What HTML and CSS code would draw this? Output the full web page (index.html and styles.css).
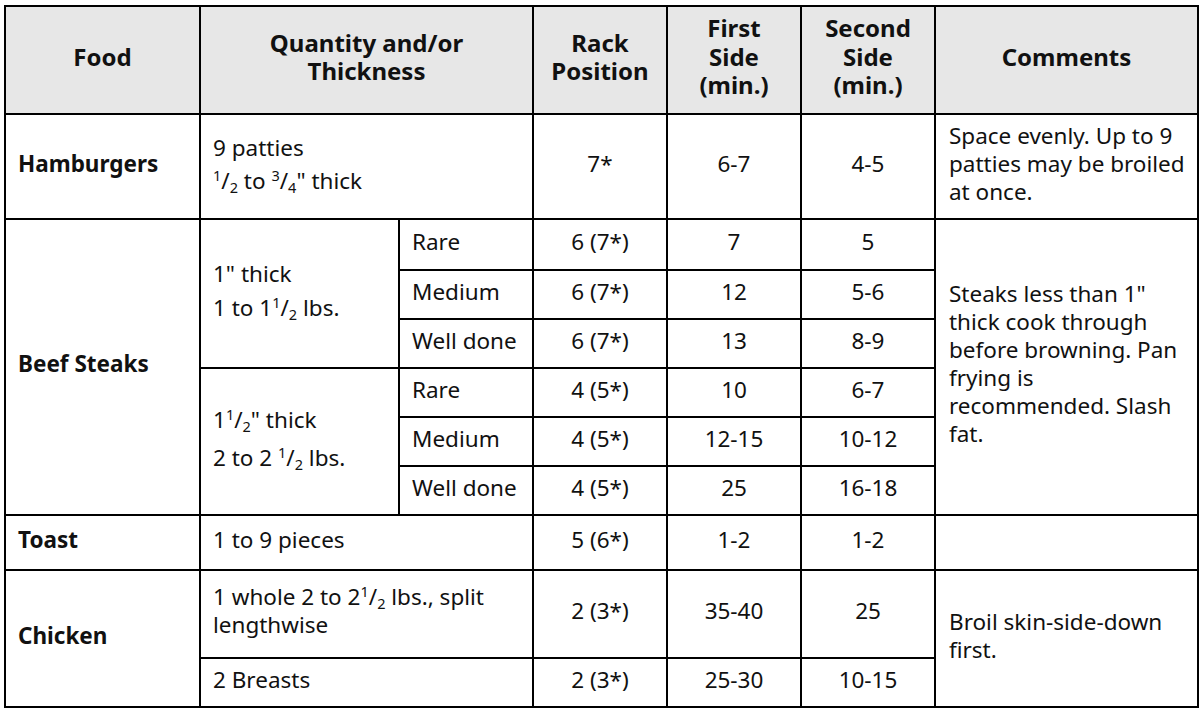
FILE: index.html
```html
<!DOCTYPE html>
<html lang="en">
<head>
<meta charset="utf-8">
<title>Broiling Guide</title>
<link rel="stylesheet" href="styles.css">
</head>
<body>
<table class="guide">
  <colgroup>
    <col class="c-food">
    <col class="c-qty">
    <col class="c-done">
    <col class="c-num">
    <col class="c-num">
    <col class="c-num">
    <col class="c-comm">
  </colgroup>
  <thead>
    <tr class="r-head">
      <th>Food</th>
      <th colspan="2">Quantity and/or<br>Thickness</th>
      <th>Rack<br>Position</th>
      <th>First<br>Side<br>(min.)</th>
      <th>Second<br>Side<br>(min.)</th>
      <th>Comments</th>
    </tr>
  </thead>
  <tbody>
    <tr class="r51">
      <td class="food">Hamburgers</td>
      <td colspan="2" class="qty lh33">9 patties<br><span class="sup">1</span>/<span class="sub">2</span> to <span class="sup">3</span>/<span class="sub">4</span>" thick</td>
      <td class="num">7*</td>
      <td class="num">6-7</td>
      <td class="num">4-5</td>
      <td class="comm">Space evenly. Up to 9<br>patties may be broiled<br>at once.</td>
    </tr>
    <tr class="r-first">
      <td class="food" rowspan="6">Beef Steaks</td>
      <td class="qty lh34" rowspan="3">1" thick<br>1 to 1<span class="sup">1</span>/<span class="sub">2</span> lbs.</td>
      <td class="qty">Rare</td>
      <td class="num">6 (7*)</td>
      <td class="num">7</td>
      <td class="num">5</td>
      <td class="comm" rowspan="6">Steaks less than 1"<br>thick cook through<br>before browning. Pan<br>frying is<br>recommended. Slash<br>fat.</td>
    </tr>
    <tr class="r49">
      <td class="qty">Medium</td>
      <td class="num">6 (7*)</td>
      <td class="num">12</td>
      <td class="num">5-6</td>
    </tr>
    <tr class="r49">
      <td class="qty">Well done</td>
      <td class="num">6 (7*)</td>
      <td class="num">13</td>
      <td class="num">8-9</td>
    </tr>
    <tr class="r49">
      <td class="qty lh38" rowspan="3">1<span class="sup">1</span>/<span class="sub">2</span>" thick<br>2 to 2 <span class="sup">1</span>/<span class="sub">2</span> lbs.</td>
      <td class="qty">Rare</td>
      <td class="num">4 (5*)</td>
      <td class="num">10</td>
      <td class="num">6-7</td>
    </tr>
    <tr class="r49">
      <td class="qty">Medium</td>
      <td class="num">4 (5*)</td>
      <td class="num">12-15</td>
      <td class="num">10-12</td>
    </tr>
    <tr class="r49">
      <td class="qty">Well done</td>
      <td class="num">4 (5*)</td>
      <td class="num">25</td>
      <td class="num">16-18</td>
    </tr>
    <tr class="r55">
      <td class="food">Toast</td>
      <td colspan="2" class="qty">1 to 9 pieces</td>
      <td class="num">5 (6*)</td>
      <td class="num">1-2</td>
      <td class="num">1-2</td>
      <td class="comm"></td>
    </tr>
    <tr class="r88">
      <td class="food" rowspan="2">Chicken</td>
      <td colspan="2" class="qty">1 whole 2 to 2<span class="sup">1</span>/<span class="sub">2</span> lbs., split<br>lengthwise</td>
      <td class="num">2 (3*)</td>
      <td class="num">35-40</td>
      <td class="num">25</td>
      <td class="comm" rowspan="2">Broil skin-side-down<br>first.</td>
    </tr>
    <tr class="r49">
      <td colspan="2" class="qty">2 Breasts</td>
      <td class="num">2 (3*)</td>
      <td class="num">25-30</td>
      <td class="num">10-15</td>
    </tr>
  </tbody>
</table>
</body>
</html>
```

FILE: styles.css
```css
html, body {
  background: #ffffff;
}

body {
  margin: 5px 0 0 4px;
  font-family: "Noto Sans", "Open Sans", sans-serif;
  font-size: 22.5px;
  line-height: 28px;
  color: #111111;
}

.guide {
  border-collapse: collapse;
  table-layout: fixed;
  width: 1193px;
}

.c-food { width: 195px; }
.c-qty { width: 199px; }
.c-done { width: 134px; }
.c-num { width: 134px; }
.c-comm { width: 263px; }

.guide th,
.guide td {
  border: 2px solid #000000;
  padding: 3px 12px 9px;
  vertical-align: middle;
}

.guide th {
  background: #e7e7e7;
  font-size: 24px;
  font-weight: 700;
  text-align: center;
  line-height: 28.5px;
  padding: 2px 4px 8px;
}

.r-head { height: 108px; }
.r51 { height: 105px; }
.r-first { height: 51px; }
.r49 { height: 49px; }
.r55 { height: 55px; }
.r88 { height: 88px; }

.food {
  font-weight: 700;
  text-align: left;
}

.qty {
  text-align: left;
}

.num {
  text-align: center;
}

.guide td.comm {
  text-align: left;
  padding-left: 13px;
  padding-right: 2px;
  white-space: nowrap;
}

.lh33 { line-height: 33px; }
.lh34 { line-height: 34px; }
.lh38 { line-height: 38px; }

.sup,
.sub {
  font-size: 14.5px;
  line-height: 1;
}

.sup { vertical-align: 8px; }
.sub { vertical-align: -4px; }
```
